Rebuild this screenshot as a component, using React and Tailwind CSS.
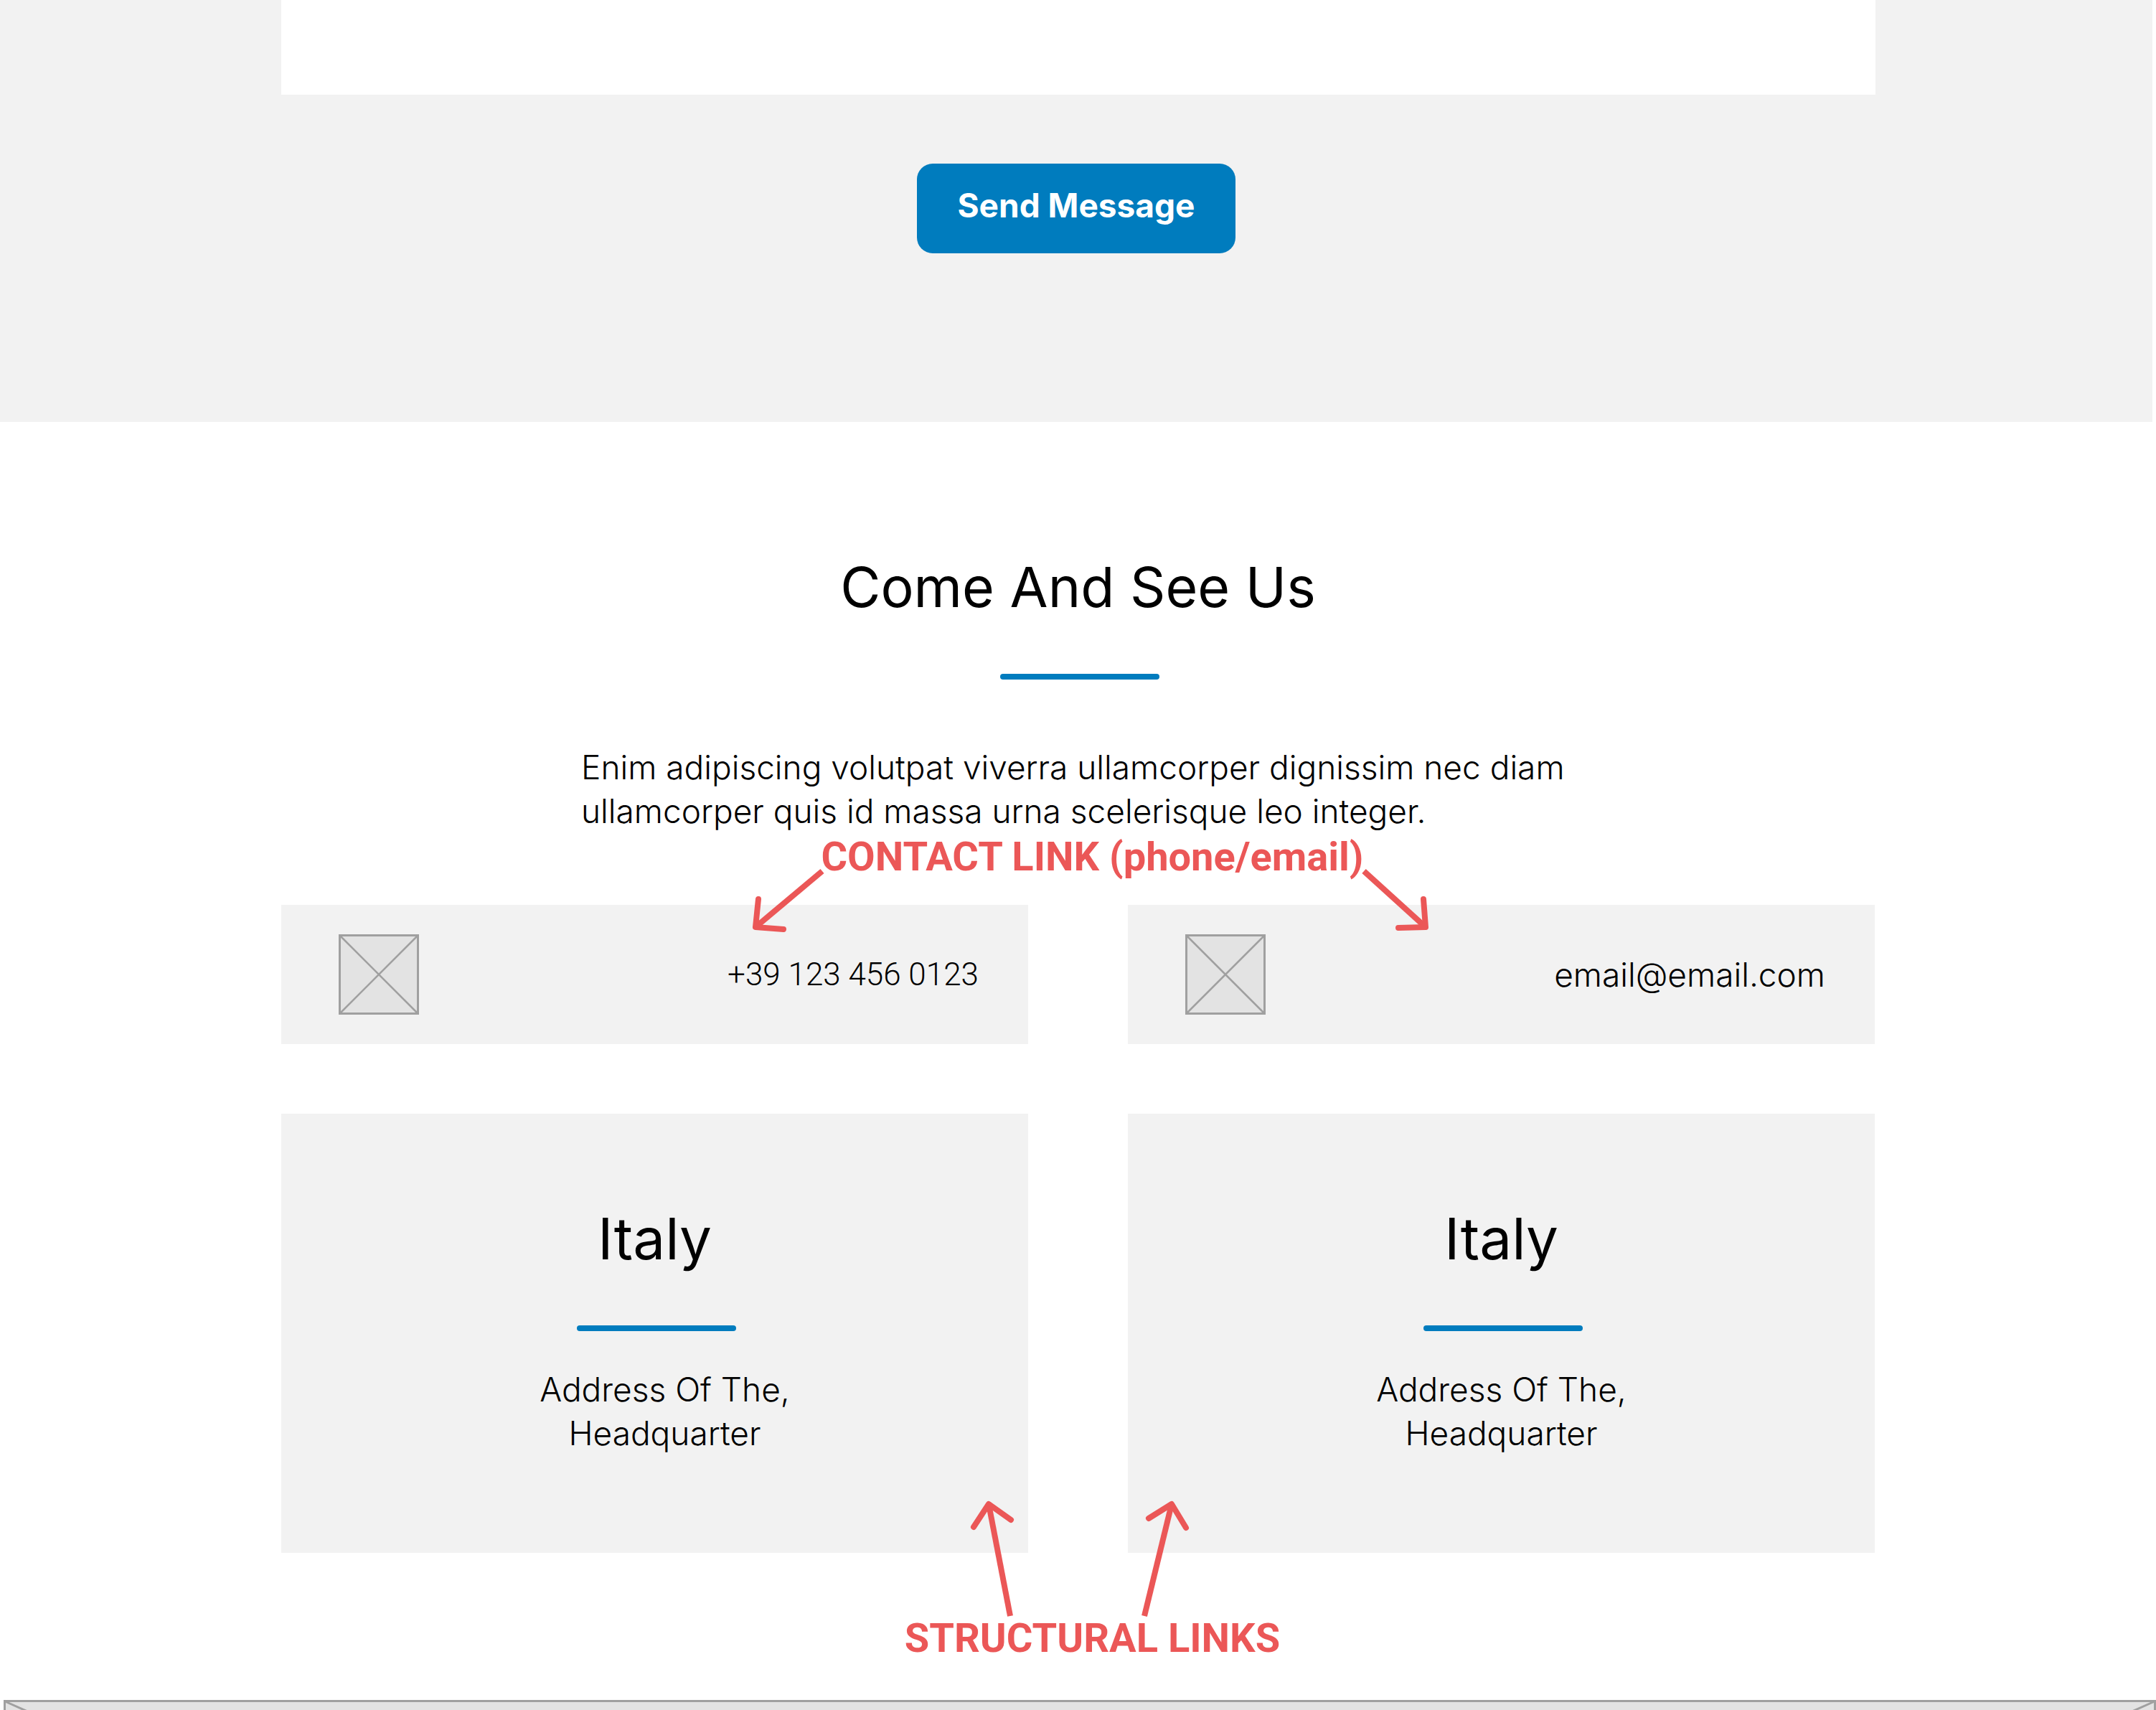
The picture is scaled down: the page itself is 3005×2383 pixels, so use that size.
const bodyText = "font-light text-[46px] leading-[61px] text-black";
const phoneText = "font-['Roboto',sans-serif] font-light text-[44px] leading-[61px] text-black";

function Rule() {
  return <div aria-hidden="true" className="mt-[73px] ml-1 h-2 w-[222px] self-center rounded-full bg-[#007cbe]" />;
}

function PlaceholderIcon() {
  return (
    <svg viewBox="0 0 112 112" className="size-28 shrink-0" fill="#e3e3e3" stroke="#a0a0a0" aria-hidden="true">
      <rect x="1.5" y="1.5" width="109" height="109" strokeWidth="3" />
      <path d="M2 2 110 110M110 2 2 110" strokeWidth="2.5" />
    </svg>
  );
}

function ContactCard({ href, label, textClass }) {
  return (
    <div className="flex items-center justify-between bg-[#f2f2f2] py-[41px] pr-[69px] pl-20">
      <PlaceholderIcon />
      <a href={href} className={textClass}>{label}</a>
    </div>
  );
}

function LocationCard({ addressClass = "" }) {
  return (
    <a href="#headquarter" className="flex flex-col items-center bg-[#f2f2f2] pt-[126px] pb-[135px]">
      <h3 className="text-[80px] leading-[96px]">Italy</h3>
      <Rule />
      <p className={`mt-[51px] mb-px text-center ${bodyText} ${addressClass}`}>
        Address Of The,
        <br />
        Headquarter
      </p>
    </a>
  );
}

function Note({ children, arrows }) {
  return (
    <div className="flex justify-center pl-10">
      <p className="relative font-['Roboto',sans-serif] text-[56px] leading-[64px] font-bold whitespace-nowrap text-[#eb5757]">
        {children}
        {arrows}
      </p>
    </div>
  );
}

function Arrow({ className, width, height, shaft, head }) {
  return (
    <svg
      viewBox={`0 0 ${width} ${height}`}
      width={width}
      height={height}
      className={`pointer-events-none absolute overflow-visible ${className}`}
      fill="none"
      stroke="currentColor"
      strokeWidth="8"
      strokeLinejoin="round"
      aria-hidden="true"
    >
      <path d={shaft} />
      <path d={head} strokeLinecap="round" />
    </svg>
  );
}

export default function App() {
  return (
    <div className="overflow-hidden bg-white font-['Inter',sans-serif] text-black">
      <section className="flex flex-col items-center border-r-[5px] border-white bg-[#f2f2f2] pb-[235px]">
        <textarea
          aria-label="Message"
          className="ml-[5px] block h-[132px] w-full max-w-[2222px] resize-none bg-white p-8 text-[46px] outline-none"
        />
        <button
          type="button"
          className="mt-24 h-[125px] rounded-[22px] bg-[#007cbe] px-[50px] pb-2 text-[46px] font-bold text-white"
        >
          <span className="px-1.5">Send Message</span>
        </button>
      </section>

      <main className="mx-auto flex w-full max-w-[2221px] flex-col pt-[182px]">
        <h2 className="text-center text-[77px] leading-[96px]">Come And See Us</h2>
        <Rule />
        <p className={`mt-[92px] mb-px ml-[418px] ${bodyText}`}>
          Enim adipiscing volutpat viverra ullamcorper dignissim nec diam
          <br />
          ullamcorper quis id massa urna scelerisque leo integer.
        </p>

        <Note
          arrows={
            <>
              <Arrow className="top-[43px] right-full" width={110} height={96} shaft="M112 9 19 87" head="M23 48 19 87 58 90" />
              <Arrow className="top-[43px] left-full" width={96} height={96} shaft="M0 9 86 87" head="M83 48 86 87 48 88" />
            </>
          }
        >
          CONTACT LINK (phone/email)
        </Note>

        <div className="mt-[35px] grid grid-cols-2 gap-x-[139px] gap-y-[97px]">
          <ContactCard href="tel:+391234560123" label="+39 123 456 0123" textClass={phoneText} />
          <ContactCard href="mailto:email@email.com" label="email@email.com" textClass={bodyText} />
          <LocationCard addressClass="pl-7" />
          <LocationCard />
        </div>

        <div className="mt-[87px]">
          <Note
            arrows={
              <>
                <Arrow className="bottom-full left-0" width={519} height={164} shaft="M147 165 117 9" head="M96 41 117 9 148 31" />
                <Arrow className="bottom-full left-0" width={519} height={164} shaft="M334 165 372 9" head="M340 29 372 9 392 42" />
              </>
            }
          >
            STRUCTURAL LINKS
          </Note>
        </div>
      </main>

      <div className="mt-[54px] ml-[5px] h-[14px] overflow-hidden">
        <svg viewBox="0 0 3000 1340" className="block w-full" fill="#e3e3e3" stroke="#a0a0a0" strokeWidth="3" aria-hidden="true">
          <rect x="1.5" y="1.5" width="2997" height="1337" />
          <path d="M2 2 2998 1338M2998 2 2 1338" />
        </svg>
      </div>
    </div>
  );
}
